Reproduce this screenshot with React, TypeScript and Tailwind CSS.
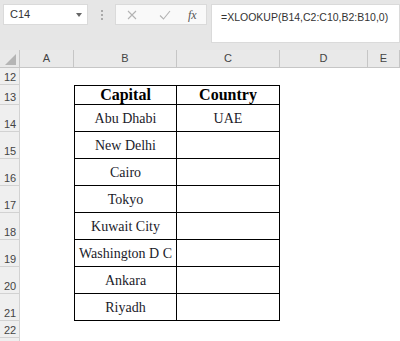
import React from "react";

const rows = [
  { n: 14, capital: "Abu Dhabi", country: "UAE" },
  { n: 15, capital: "New Delhi", country: "" },
  { n: 16, capital: "Cairo", country: "" },
  { n: 17, capital: "Tokyo", country: "" },
  { n: 18, capital: "Kuwait City", country: "" },
  { n: 19, capital: "Washington D C", country: "" },
  { n: 20, capital: "Ankara", country: "" },
  { n: 21, capital: "Riyadh", country: "" },
];

const ui = { fontFamily: '"Liberation Sans", Arial, sans-serif' };
const serif = { fontFamily: '"Liberation Serif", "Times New Roman", serif' };

function RowHead({ n, h }: { n?: number; h: string }) {
  return (
    <div className={`${h} bg-[#efefef] border-r border-b border-[#d2d2d2] flex items-end pl-[4px] pb-[1px] text-[11px] leading-none text-[#444]`}>
      {n}
    </div>
  );
}

export default function App() {
  return (
    <div className="w-[400px] h-[341px] overflow-hidden bg-white" style={ui}>
      {/* Formula bar */}
      <div className="h-[50px] bg-[#e6e6e6] flex items-start pt-[4px]">
        <div className="ml-[3px] w-[85px] h-[21px] bg-white border border-[#dadada] flex items-center justify-between pl-[6px] pr-[5px]">
          <span className="text-[11px] text-[#333]">C14</span>
          <svg width="6" height="4" viewBox="0 0 6 4">
            <path d="M0 0h6L3 4z" fill="#666" />
          </svg>
        </div>
        <div className="w-[27px] h-[21px] flex flex-col items-center justify-center gap-[2px]">
          <span className="w-[2px] h-[2px] bg-[#aaa]" />
          <span className="w-[2px] h-[2px] bg-[#aaa]" />
          <span className="w-[2px] h-[2px] bg-[#aaa]" />
        </div>
        <div className="w-[92px] h-[21px] bg-[#f9f9f9] border border-[#dadada] flex items-center">
          <svg className="ml-[11px]" width="10" height="10" viewBox="0 0 10 10">
            <path d="M1 1l8 8M9 1l-8 8" stroke="#b3b3b3" strokeWidth="1.1" fill="none" />
          </svg>
          <svg className="ml-[22px]" width="12" height="10" viewBox="0 0 12 10">
            <path d="M1 5.5l3.5 3.5L11 1" stroke="#b3b3b3" strokeWidth="1.1" fill="none" />
          </svg>
          <span className="ml-[17px] text-[12px] italic text-[#555]" style={serif}>
            fx
          </span>
        </div>
        <div className="ml-[4px] flex-1 h-[39px] bg-white border border-[#dadada] pl-[9px] pt-[5px] text-[10.5px] text-[#333] leading-[14px]">
          =XLOOKUP(B14,C2:C10,B2:B10,0)
        </div>
      </div>

      {/* Grid */}
      <div className="grid grid-cols-[20px_54px_103px_103px_88px_1fr]">
        {/* Column headers */}
        <div className="h-[18px] bg-[#e9e9e9] border-r border-b border-[#c6c6c6] relative">
          <svg className="absolute right-[3px] bottom-[2px]" width="11" height="11" viewBox="0 0 11 11">
            <path d="M11 0V11H0z" fill="#b5b5b5" />
          </svg>
        </div>
        {["A", "B", "C", "D", "E"].map((c) => (
          <div
            key={c}
            className="h-[18px] bg-[#e9e9e9] border-r border-b border-[#c6c6c6] flex items-center justify-center text-[11px] text-[#444]"
          >
            {c}
          </div>
        ))}

        {/* Row 12 */}
        <RowHead n={12} h="h-[17px]" />
        <div className="col-span-5" />

        {/* Row 13 header */}
        <RowHead n={13} h="h-[20px]" />
        <div />
        <div className="h-[20px] border border-black flex items-center justify-center text-[16px] font-bold text-black" style={serif}>
          Capital
        </div>
        <div className="h-[20px] border-t border-r border-b border-black flex items-center justify-center text-[16px] font-bold text-black" style={serif}>
          Country
        </div>
        <div className="col-span-2" />

        {rows.map((r) => (
          <React.Fragment key={r.n}>
            <RowHead n={r.n} h="h-[27px]" />
            <div />
            <div className="h-[27px] border-l border-r border-b border-black flex items-center justify-center text-[14px] text-[#1b1b2a]" style={serif}>
              {r.capital}
            </div>
            <div className="h-[27px] border-r border-b border-black flex items-center justify-center text-[14px] text-[#1b1b2a]" style={serif}>
              {r.country}
            </div>
            <div className="col-span-2" />
          </React.Fragment>
        ))}

        <RowHead n={22} h="h-[17px]" />
        <div className="col-span-5" />
        <RowHead h="h-[17px]" />
        <div className="col-span-5" />
      </div>
    </div>
  );
}
